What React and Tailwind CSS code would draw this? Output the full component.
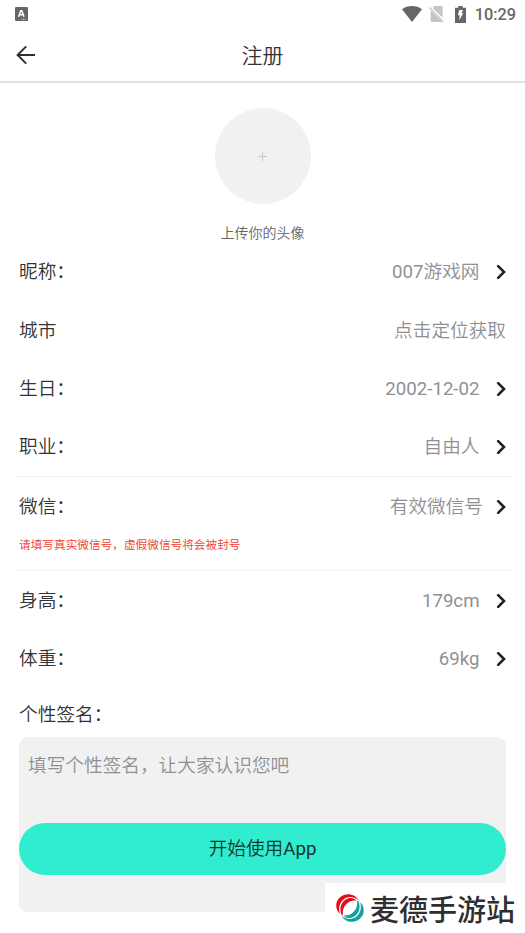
import React from "react";

const details = [
  { label: "昵称：", value: "007游戏网", arrow: true },
  { label: "城市", value: "点击定位获取", arrow: false },
  { label: "生日：", value: "2002-12-02", arrow: true },
  { label: "职业：", value: "自由人", arrow: true },
];

const body = [
  { label: "身高：", value: "179cm", arrow: true },
  { label: "体重：", value: "69kg", arrow: true },
];

export default function App() {
  return (
    <div className="relative flex h-[933px] w-[525px] flex-col overflow-hidden bg-white font-[Roboto,'Noto_Sans_CJK_SC_DemiLight','Noto_Sans_CJK_SC',sans-serif] text-[#333333]">
      <StatusBar />

      <header className="grid h-[55px] shrink-0 grid-cols-[1fr_auto_1fr] items-center border-b-2 border-[#e2e2e2] px-4">
        <svg className="h-5 w-5" viewBox="0 0 20 20" fill="none" stroke="#303033" strokeWidth="2">
          <path d="M19 10H2M10.2 1.4 1.6 10l8.6 8.6" />
        </svg>
        <h1 className="pt-[2px] text-[21px] leading-[28px]">注册</h1>
      </header>

      <section className="flex h-[159px] shrink-0 flex-col items-center pt-[25px]">
        <button className="flex h-24 w-24 shrink-0 items-center justify-center rounded-full bg-[#f1f1f1]">
          <svg className="h-[9px] w-[9px]" viewBox="0 0 9 9" stroke="#c8c8c8" strokeWidth="1">
            <path d="M4.5 0v9M0 4.5h9" />
          </svg>
        </button>
        <p className="mt-[19px] text-[14px] leading-5 text-[#666666]">上传你的头像</p>
      </section>

      <section className="shrink-0">
        {details.map((item) => (
          <Row key={item.label} {...item} />
        ))}
      </section>

      <section className="mx-[14px] h-[95px] shrink-0 border-y border-[#f2f2f2] px-[5px]">
        <div className="flex h-[58px] items-center justify-between pt-[2px] text-[18.67px]">
          <span>微信：</span>
          <span className="flex items-center text-[#8f8f94]">
            有效微信号
            <Chevron className="ml-[13px]" />
          </span>
        </div>
        <p className="text-[11.67px] leading-5 text-[#f6382c]">
          请填写真实微信号，虚假微信号将会被封号
        </p>
      </section>

      <section className="shrink-0">
        {body.map((item) => (
          <Row key={item.label} {...item} />
        ))}
      </section>

      <section className="shrink-0 px-[19px]">
        <h2 className="pt-[14px] text-[18.67px] leading-[28px]">个性签名：</h2>
        <div className="mt-[8px] flex h-[175px] flex-col rounded-[9px] bg-[#f1f1f1]">
          <p className="pt-[15px] pl-[9px] text-[18.67px] leading-[28px] text-[#8f8f94]">
            填写个性签名，让大家认识您吧
          </p>
          <button className="mt-[43px] h-[52px] w-full rounded-full bg-[#30edcf] text-[18.67px] text-[#17342f]">
            开始使用App
          </button>
        </div>
      </section>

      <Brand />
    </div>
  );
}

function StatusBar() {
  return (
    <div className="flex h-7 shrink-0 items-center justify-between pr-[9px] pl-[15px] text-[#666666]">
      <svg className="h-[14px] w-[13px]" viewBox="0 0 13 14">
        <rect width="13" height="14" rx="1" fill="#666666" />
        <path d="m3.6 9.8 2.2-6h1l2.2 6M4.5 7.8h3.7" fill="none" stroke="#fff" strokeWidth="1.5" />
        <path d="M6.5 12.3h5" stroke="#ddd" strokeWidth="1" strokeDasharray="1 .7" />
      </svg>
      <div className="flex items-center">
        <svg className="h-4 w-5" viewBox="0 0 20 16">
          <path d="M0 3.3C5.6-1 14.4-1 20 3.3L10 16Z" fill="currentColor" />
        </svg>
        <svg className="ml-[7px] h-[17px] w-[15px]" viewBox="0 0 15 17">
          <path d="M5.5 0H12.5Q13.7 0 13.7 1.2V11.8L3.600 2ZM1.700 4.200 13 15.600Q12.800 16 12.300 16H2.700Q1.700 16 1.700 15Z" fill="#c4c4c4" />
          <path d="m.4 1.500 14 14.400" stroke="#c4c4c4" strokeWidth="1.200" />
        </svg>
        <svg className="ml-[11px] h-[17px] w-[11px]" viewBox="0 0 11 17">
          <path d="M3.300 0h4.400v1.700H11V17H0V1.700h3.300Z" fill="currentColor" />
          <path d="M4.200 4h3.600L6.700 7.300h1.600L4.200 14.300l.5-5H2.900Z" fill="#fff" />
        </svg>
        <span className="ml-[9px] pt-px text-[16.3px] leading-7 font-medium">10:29</span>
      </div>
    </div>
  );
}

function Row({ label, value, arrow }) {
  return (
    <div className="flex h-[58.4px] items-center justify-between px-[19px] pt-[2px] text-[18.67px]">
      <span>{label}</span>
      <span className="flex items-center text-[#8f8f94]">
        {value}
        {arrow && <Chevron className="ml-[16.5px]" />}
      </span>
    </div>
  );
}

function Chevron({ className }) {
  return (
    <svg className={`h-[14px] w-[10px] ${className}`} viewBox="0 0 10 14" fill="none" stroke="#21212b" strokeWidth="2.6">
      <path d="m2.200 1.200 5.800 5.800-5.800 5.800" strokeLinecap="round" />
    </svg>
  );
}

// site logo pinned to the bottom right corner
function Brand() {
  return (
    <div className="absolute right-0 bottom-0 flex h-[50px] w-[200px] items-center bg-white pl-[11px]">
      <svg className="h-7 w-7 shrink-0" viewBox="0 0 28 28">
        <g fill="#e60d1b">
          <path d="M3.800 20C-1.500 14.500-.8 6.500 5 2.600 11-1.500 19-.3 22.800 6.800 18.500 2.500 12.300 1.800 7.800 5.200 3.500 8.500 2.200 14 3.800 20Z" />
          <path d="M5.300 20.300C3.300 14.500 4.800 9 9 6c4.500-3.200 9-2.300 11.500.6C17 6 13.500 7 11 9.500 7.800 12.500 6.300 16 7 21.500Z" />
        </g>
        <g fill="#12a39c">
          <path d="M24.200 8C29.500 13.500 28.800 21.500 23 25.400 17 29.500 9 28.300 5.200 21.200 9.500 25.500 15.700 26.200 20.200 22.800 24.500 19.500 25.800 14 24.200 8Z" />
          <path d="M22.700 7.700C24.700 13.500 23.200 19 19 22c-4.500 3.200-9 2.300-11.500-.6 3.500.6 7-.4 9.500-2.900 3.200-3 4.700-6.500 4-12Z" />
        </g>
      </svg>
      <span className="ml-[6px] pt-px font-['Noto_Sans_CJK_SC'] text-[29px] leading-none font-medium whitespace-nowrap text-[#2f2f31]">
        麦德手游站
      </span>
    </div>
  );
}
